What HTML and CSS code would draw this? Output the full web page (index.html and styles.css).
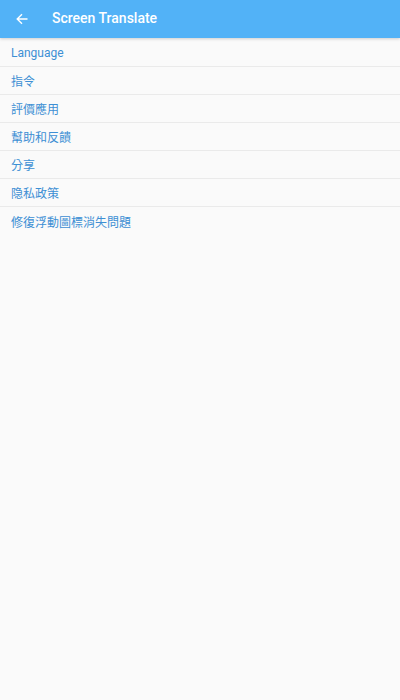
FILE: index.html
```html
<!DOCTYPE html>
<html>
<head>
<meta charset="utf-8">
<link rel="stylesheet" href="styles.css">
</head>
<body>
<header class="bar">
  <svg class="back" width="12" height="12" viewBox="0 0 12 12"><path d="M11.5 6H1.2M6 1.2L1.2 6 6 10.8" fill="none" stroke="#fff" stroke-width="1.4"/></svg>
  <span class="title">Screen Translate</span>
</header>
<ul class="list">
  <li>Language</li>
  <li>指令</li>
  <li>評價應用</li>
  <li>幫助和反饋</li>
  <li>分享</li>
  <li>隐私政策</li>
  <li class="last">修復浮動圖標消失問題</li>
</ul>
</body>
</html>
```
FILE: styles.css
```css
html, body {
  margin: 0;
  padding: 0;
  background: #fafafa;
  font-family: Roboto, "Noto Sans CJK TC", sans-serif;
}
.bar {
  height: 38px;
  background: #52b2f7;
  display: flex;
  align-items: center;
  box-shadow: 0 1px 3px rgba(0,0,0,0.18);
  position: relative;
}
.back {
  margin-left: 16px;
  margin-top: -1px;
}
.title {
  margin-left: 24px;
  color: #fff;
  font-size: 14px;
  font-weight: 500;
  margin-top: -2px;
}
.list {
  list-style: none;
  margin: 0;
  padding: 1px 0 0;
}
.list li {
  box-sizing: border-box;
  height: 28px;
  border-bottom: 1px solid #eaeaea;
  display: flex;
  align-items: center;
  padding-left: 11px;
  color: #3d8fd4;
  font-size: 12px;
}
.list li.last {
  border-bottom: none;
}
```
